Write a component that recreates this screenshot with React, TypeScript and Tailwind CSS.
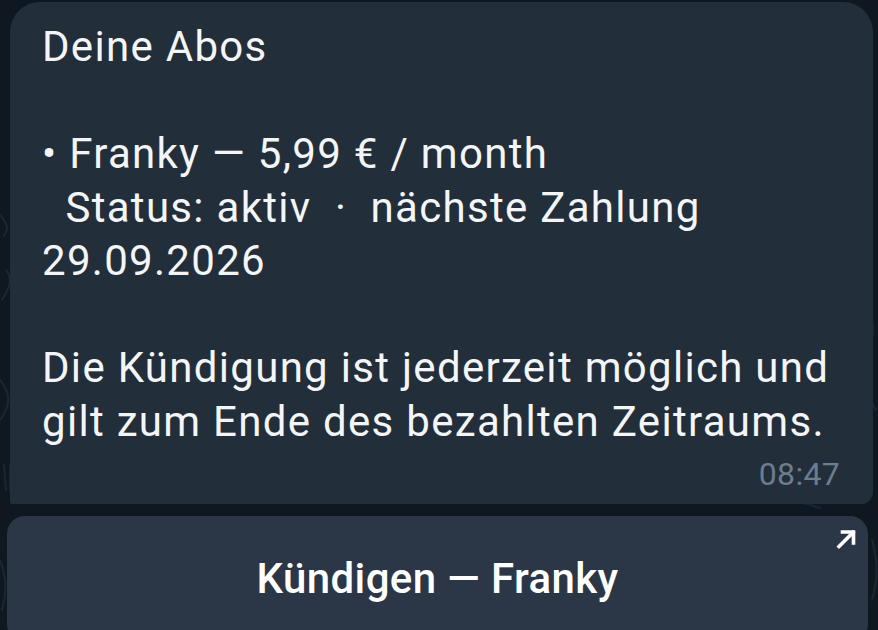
import React from 'react';

function Doodles() {
  return (
    <svg className="absolute inset-0 w-full h-full" viewBox="0 0 878 630" fill="none">
      <g stroke="#1b2733" strokeWidth="2" strokeLinecap="round">
        <path d="M0 215 C 6 222, 10 228, 4 236" />
        <path d="M2 300 C 8 290, 14 280, 6 270" />
        <path d="M0 380 C 10 392, 12 405, 0 420" />
        <path d="M4 465 L 6 490 M 10 465 L 10 490" />
        <path d="M860 300 C 870 310, 876 320, 872 340" />
        <path d="M872 360 C 866 380, 866 395, 876 410" />
        <path d="M700 500 C 740 494, 780 494, 820 508" />
        <path d="M0 560 C 6 575, 8 590, 2 610" />
        <path d="M872 540 C 878 560, 878 580, 872 600" />
      </g>
    </svg>
  );
}

function ArrowIcon() {
  return (
    <svg width="23" height="22" viewBox="0 0 23 22" fill="none">
      <path d="M4 18.5 L18 4.5" stroke="white" strokeWidth="3.6" strokeLinecap="square" />
      <path d="M7.5 4 H18.5 V15" stroke="white" strokeWidth="3.6" strokeLinecap="square" />
    </svg>
  );
}

export default function App() {
  return (
    <div
      className="relative w-[878px] h-[630px] overflow-hidden bg-[#0f1821]"
      style={{ fontFamily: 'Roboto, "Noto Sans", sans-serif' }}
    >
      <Doodles />
      <div className="relative flex flex-col pt-[2px]">
        {/* message bubble */}
        <div className="ml-[10px] w-[863px] bg-[#232e3b] rounded-tl-[30px] rounded-tr-[30px] rounded-br-[12px] rounded-bl-[2px] pl-[32px] pr-[33px] pt-[18px] pb-[10px]">
          <div className="text-[42px] leading-[53.5px] tracking-[1.3px] text-[#f3f5f7] whitespace-pre">
            <div>Deine Abos</div>
            <div>&nbsp;</div>
            <div>• Franky — 5,99 € / month</div>
            <div>{'  Status: aktiv  ·  nächste Zahlung'}</div>
            <div>29.09.2026</div>
            <div>&nbsp;</div>
            <div>Die Kündigung ist jederzeit möglich und</div>
            <div>gilt zum Ende des bezahlten Zeitraums.</div>
          </div>
          <div className="flex justify-end mt-[6px]">
            <span className="text-[32px] leading-[40px] tracking-[0.3px] text-[#6c7d8e]">08:47</span>
          </div>
        </div>

        {/* inline button */}
        <div className="relative mt-[12px] ml-[7px] w-[861px] h-[126px] bg-[#2b3746] rounded-t-[18px] rounded-b-[18px] flex items-center justify-center">
          <span className="text-[42px] font-medium tracking-[0.4px] text-white leading-none">Kündigen — Franky</span>
          <div className="absolute top-[12px] right-[10px]">
            <ArrowIcon />
          </div>
        </div>
      </div>
    </div>
  );
}
